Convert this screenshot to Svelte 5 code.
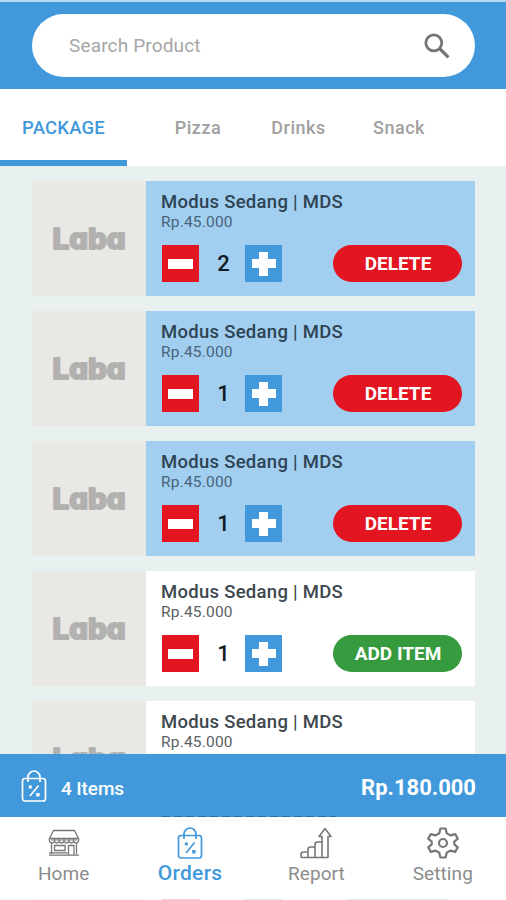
<script>
  const tabs = ['PACKAGE', 'Pizza', 'Drinks', 'Snack'];
  const items = [
    { qty: 2, selected: true },
    { qty: 1, selected: true },
    { qty: 1, selected: true },
    { qty: 1, selected: false },
    { qty: null, selected: false }
  ];
</script>

{#snippet bag()}
  <svg class="bag" viewBox="0 0 26 34" width="26" height="34" fill="none" stroke="currentColor">
    <rect x="1.500" y="9.500" width="23" height="22.500" rx="2.500" stroke-width="1.700" />
    <path d="M7 13V8.200a6 6.200 0 0 1 12 0V13" stroke-width="1.700" />
    <path d="M17.600 16.500 9 27" stroke-width="1.700" />
    <rect x="7.800" y="16.500" width="3" height="3" fill="currentColor" stroke="none" />
    <rect x="15.200" y="24" width="3.400" height="3.400" fill="currentColor" stroke="none" />
  </svg>
{/snippet}

<div class="app">
  <header>
    <div class="search">
      <span>Search Product</span>
      <svg viewBox="0 0 26 26" width="26" height="26" fill="none" stroke="#757575">
        <circle cx="9.800" cy="9.800" r="8" stroke-width="2.800" />
        <path d="m15.700 15.700 8.700 8.700" stroke-width="3.300" />
      </svg>
    </div>
  </header>

  <nav class="tabs">
    {#each tabs as tab, i}
      <div class="tab t{i}" class:active={i === 0}><span>{tab}</span></div>
    {/each}
  </nav>

  <main>
    {#each items as item}
      <article class:selected={item.selected}>
        <div class="thumb">
          <svg viewBox="0 0 90 50" width="90" height="50">
            <text x="8.500" y="34.500" textLength="73" lengthAdjust="spacingAndGlyphs">Laba</text>
          </svg>
        </div>
        <div class="info">
          <h2>Modus Sedang | MDS</h2>
          <p>Rp.45.000</p>
          {#if item.qty}
            <div class="controls">
              <button class="step minus" aria-label="Decrease"><i></i></button>
              <b>{item.qty}</b>
              <button class="step plus" aria-label="Increase"><i></i></button>
              <button class="action" class:add={!item.selected}>{item.selected ? 'DELETE' : 'ADD ITEM'}</button>
            </div>
          {/if}
        </div>
      </article>
    {/each}
  </main>

  <section class="summary">
    {@render bag()}
    <span class="count">4 Items</span>
    <strong>Rp.180.000</strong>
    <div class="peek"></div>
  </section>

  <nav class="bottom">
    <div class="item home">
      <svg viewBox="0 0 32 34" width="32" height="34" fill="none" stroke="#777" stroke-width="1.300">
        <path d="M5.500 4.500h21l4 8h-29zM1.500 12.500v3q2.500 3 5 0 2.400 3 4.800 0 2.400 3 4.800 0 2.400 3 4.800 0 2.400 3 4.800 0 2.400 3 4.800 0v-3M3.500 17v11M28.500 17v11M1 29.200h30M1 26.800h18.500M6.500 19.500h10.500v5H6.500zM20.500 29v-9.500h5.500V29" />
        <path d="M6.500 12.500v3M11.300 12.500v3M16 12.500v3M20.800 12.500v3M25.600 12.500v3" stroke-width="1" />
        <path d="M3 14h26" stroke-width="2" opacity=".5" />
      </svg>
      <span>Home</span>
    </div>
    <div class="item orders">{@render bag()}<span>Orders</span></div>
    <div class="item report">
      <svg viewBox="0 0 34 34" width="34" height="34" fill="none" stroke="#777" stroke-width="1.600" stroke-linejoin="round">
        <path d="M2 31.500h27V10.500h3L26 2.500l-6 8h3v21M2 31.500v-3q0-2.500 2.500-2.500H9v5.500M9 26v-2.500q0-2.500 2.500-2.500H16v10.500M16 21v-2.500q0-2.500 2.500-2.500H23" />
      </svg>
      <span>Report</span>
    </div>
    <div class="item setting">
      <svg viewBox="0 0 34 34" width="34" height="34" fill="none" stroke="#777" stroke-width="2.200" stroke-linejoin="round">
        <circle cx="17" cy="17" r="4" />
        <path d="M14.400 2.500h5.200l1.100 4.700 3.700 2.200 4.800-1.300 2.600 4.600-3.500 3v2.600l3.500 3-2.600 4.600-4.800-1.300-3.700 2.200-1.100 4.700h-5.200l-1.100-4.700-3.700-2.200-4.800 1.300-2.600-4.600 3.500-3v-2.600l-3.500-3 2.600-4.600 4.800 1.300 3.700-2.200z" />
      </svg>
      <span>Setting</span>
    </div>
  </nav>
  <div class="edge"></div>
</div>

<style>
  :global(body) { background: #e8f0f0; }
  .app {
    width: 506px; height: 900px; overflow: hidden; display: flex; flex-direction: column;
    background: #e8f0f0; font-family: Roboto, "Liberation Sans", sans-serif; box-sizing: border-box;
  }
  svg { display: block; flex: none; }
  header { flex: none; height: 89px; box-sizing: border-box; border-top: 2px solid #b4d8f3; background: #4199dc; padding: 12px 31px 0 32px; }
  .search { height: 63px; border-radius: 32px; background: #fff; display: flex; align-items: center; justify-content: space-between; padding: 0 25px 0 37px; }
  .search span { font-size: 19px; letter-spacing: .15px; color: #a6a6a6; }
  .tabs { flex: none; height: 77px; background: #fff; display: flex; }
  .tab { box-sizing: border-box; height: 77px; padding-top: 28px; font-size: 18px; line-height: 22px; font-weight: 500; letter-spacing: .5px; color: #a0a0a0; white-space: nowrap; text-align: center; }
  .t0 { width: 127px; border-bottom: 6px solid #4199dc; }
  .t1 { width: 142px; }
  .t2 { width: 59px; }
  .t3 { width: 142px; }
  .tab.active { color: #4199dc; font-size: 18.500px; letter-spacing: .2px; }
  main { flex: none; height: 588px; box-sizing: border-box; padding: 15px 31px 0 32px; overflow: hidden; display: flex; flex-direction: column; gap: 15px; }
  article { flex: none; height: 115px; display: flex; background: #fff; }
  article.selected { background: #a2cef0; }
  .thumb { width: 114px; background: #e8e8e4; display: flex; justify-content: center; align-items: center; }
  text { font-family: Inter, Roboto, sans-serif; font-feature-settings: "cv11"; font-weight: 800; font-size: 28px; fill: #b2b1b0; stroke: #b2b1b0; stroke-width: 1.800px; stroke-linejoin: round; }
  .info { flex: 1; padding: 10px 13px 0 15px; }
  h2 { margin: 0; font-size: 18.500px; line-height: 23px; font-weight: 500; letter-spacing: .28px; color: #3d474e; white-space: nowrap; }
  article.selected h2 { color: #2e4454; }
  p { margin: 0; font-size: 15.500px; line-height: 17px; letter-spacing: .2px; color: #595f64; }
  article.selected p { color: #47647a; }
  .controls { display: flex; align-items: center; margin-top: 14px; }
  .controls b { width: 43px; padding-left: 3px; text-align: center; font-size: 22px; font-weight: 500; color: #101c24; }
  button { border: 0; padding: 0; font-family: inherit; }
  .step { width: 37px; height: 37px; display: grid; place-items: center; margin-left: 1px; }
  .minus { background: #e31520; }
  .minus i { width: 25px; height: 10px; background: #fff; }
  .plus { background: #4199dc; margin-left: 0; }
  .plus i { width: 24px; height: 24px; background: linear-gradient(#fff, #fff) center / 24px 9px no-repeat, linear-gradient(#fff, #fff) center / 9px 24px no-repeat; }
  .action { margin-left: auto; width: 129px; height: 37px; border-radius: 19px; background: #e31520; color: #fff; font-weight: 700; font-size: 19px; padding-left: 1px; }
  .action.add { background: #369a3e; }
  .summary { flex: none; height: 63px; background: #4199dc; color: #fff; display: flex; align-items: center; padding: 0 30px 0 21px; position: relative; }
  .count { margin-left: 14px; padding-top: 6px; font-size: 19px; font-weight: 500; letter-spacing: -.1px; }
  .summary strong { margin-left: auto; padding-top: 4px; font-size: 22px; font-weight: 700; }
  .peek { position: absolute; left: 162px; bottom: 0; width: 174px; height: 1px; background: repeating-linear-gradient(90deg, #28618f 0 8px, #4199dc 8px 12px); opacity: .8; }
  .bottom { flex: none; height: 82px; background: #fff; display: flex; padding: 9px 0 0 .500px; box-sizing: border-box; }
  .item { display: flex; flex-direction: column; align-items: center; color: #8c8c8c; width: 126.500px; }
  .item span { font-size: 19px; line-height: 22px; letter-spacing: .1px; margin-top: 3px; }
  .item.orders { color: #4199dc; }
  .orders span { font-size: 21px; margin-top: 2px; font-weight: 500; letter-spacing: .3px; }
  .edge { flex: none; height: 1px; background: linear-gradient(90deg, #f6f8f8 0 32px, #f6f6f5 32px 146px, #fff 146px 162px, #f3cfd1 162px 200px, #fff 200px 245px, #dce8ea 245px 282px, #fff 282px 348px, #e6ebe6 348px 448px, #fff 448px); }
</style>
